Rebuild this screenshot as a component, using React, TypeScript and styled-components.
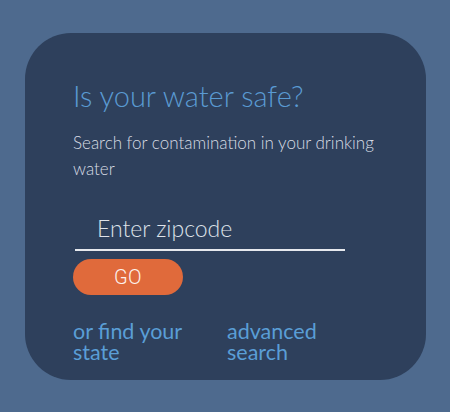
import styled, { createGlobalStyle } from "styled-components";

const GlobalStyle = createGlobalStyle`
  html, body {
    margin: 0;
    padding: 0;
    background-color: #4e6a8e;
    font-family: Lato, "Open Sans", sans-serif;
  }
`;

const Page = styled.div`
  width: 450px;
  height: 412px;
  box-sizing: border-box;
  padding: 33px 24px 0 25px;
`;

const Card = styled.div`
  width: 401px;
  height: 347px;
  box-sizing: border-box;
  background-color: #2e405c;
  border-radius: 46px;
  padding: 46px 48px 0 48px;
  display: flex;
  flex-direction: column;
  align-items: flex-start;
`;

const Title = styled.h1`
  margin: 0;
  font-size: 29px;
  font-weight: 300;
  line-height: 34px;
  color: #5a9ad2;
`;

const Subtitle = styled.p`
  margin: 17px 0 0 0;
  font-size: 17px;
  font-weight: 300;
  line-height: 26px;
  color: #d7dce4;
  width: 305px;
`;

const ZipInput = styled.input`
  margin: 24px 0 0 2px;
  width: 270px;
  height: 45px;
  box-sizing: border-box;
  padding: 0 0 0 22px;
  background: transparent;
  border: none;
  border-bottom: 2px solid #e6e9ee;
  outline: none;
  font-family: Lato, sans-serif;
  font-size: 23px;
  font-weight: 300;
  color: #e6e9ee;

  &::placeholder {
    color: #dfe3ea;
    opacity: 1;
  }
`;

const GoButton = styled.button`
  margin-top: 8px;
  width: 110px;
  height: 36px;
  padding: 0;
  border: none;
  border-radius: 18px;
  background-color: #e06a3b;
  color: #fdf3ee;
  font-family: Roboto, sans-serif;
  font-size: 20px;
  font-weight: 300;
  letter-spacing: 0.5px;
  cursor: pointer;
`;

const Links = styled.div`
  margin-top: 26px;
  display: grid;
  grid-template-columns: 154px 154px;
`;

const LinkText = styled.a`
  font-size: 21.5px;
  font-weight: 400;
  line-height: 21px;
  color: #5a9ed6;
  text-decoration: none;
  width: 125px;
`;

export default function App() {
  return (
    <Page>
      <GlobalStyle />
      <Card>
        <Title>Is your water safe?</Title>
        <Subtitle>Search for contamination in your drinking water</Subtitle>
        <ZipInput placeholder="Enter zipcode" />
        <GoButton>GO</GoButton>
        <Links>
          <LinkText href="#">or find your state</LinkText>
          <LinkText href="#">advanced search</LinkText>
        </Links>
      </Card>
    </Page>
  );
}
